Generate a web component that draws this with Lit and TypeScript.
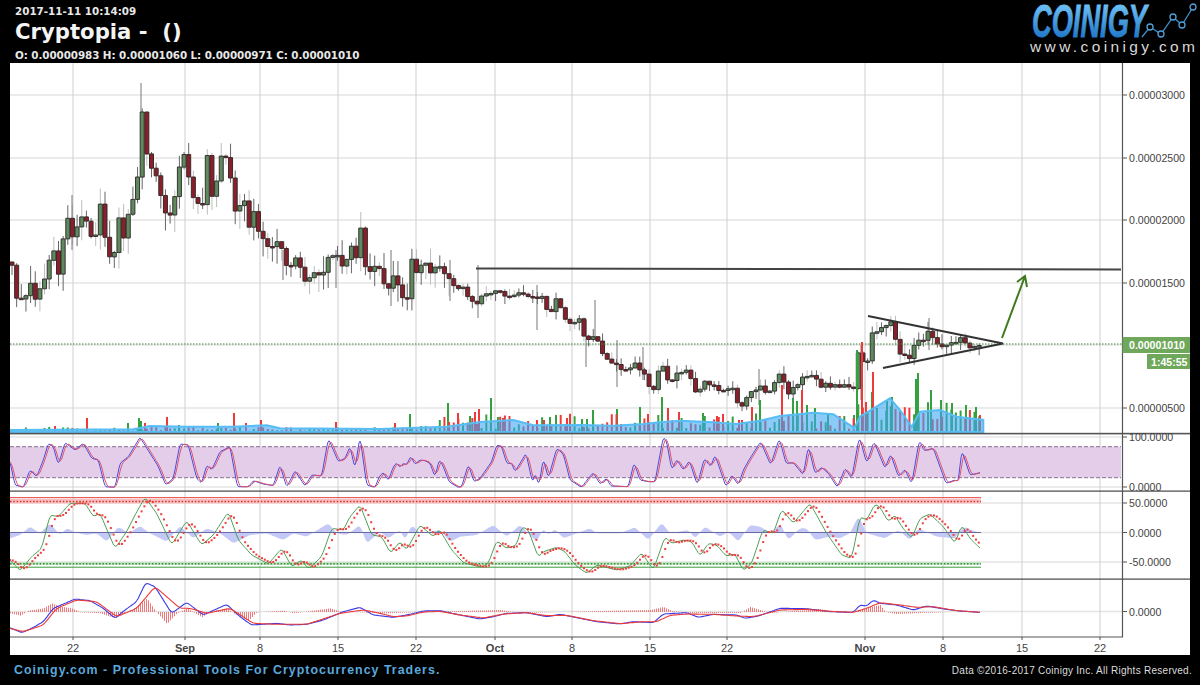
import { LitElement, html, css, svg } from "lit";
import { customElement } from "lit/decorators.js";

type P = [number, number];
const Z = (pts: number[][], ox: number, oy: number): P[] => pts.map(([X, Y]) => [ox + X / 3, oy + Y / 3] as P);
const interp = (pts: P[], x: number) => {
  if (x <= pts[0][0]) return pts[0][1];
  for (let i = 1; i < pts.length; i++) {
    if (x <= pts[i][0]) {
      const [a, b] = pts[i - 1];
      const [c, d] = pts[i];
      return b + ((d - b) * (x - a)) / Math.max(c - a, 0.01);
    }
  }
  return pts[pts.length - 1][1];
};
const sample = (pts: P[], step = 1, win = 0, lag = 0): P[] => {
  const out: P[] = [];
  const x0 = pts[0][0];
  const x1 = pts[pts.length - 1][0];
  for (let x = x0; x <= x1; x += step) {
    let s = 0;
    let n = 0;
    for (let k = -win; k <= win; k++) {
      s += interp(pts, x - lag + k);
      n++;
    }
    out.push([x, s / n]);
  }
  return out;
};
const line = (pts: P[]) => "M" + pts.map(([a, b]) => `${a.toFixed(1)} ${b.toFixed(1)}`).join("L");
const area = (pts: P[], base: number) =>
  `M${pts[0][0].toFixed(1)} ${base}L` + pts.map(([a, b]) => `${a.toFixed(1)} ${b.toFixed(1)}`).join("L") + `L${pts[pts.length - 1][0].toFixed(1)} ${base}Z`;

let seed = 12345;
const rnd = () => {
  seed = (seed * 1664525 + 1013904223) % 4294967296;
  return seed / 4294967296;
};

const pricePath: P[] = [
  ...Z([[30,565],[45,660],[60,690],[90,640],[105,670],[130,660],[150,560],[165,560],[175,600],[185,520],[205,440],[220,510],[235,460],[255,430],[270,490],[290,480],[300,400],[320,520],[335,580],[360,440],[378,560],[385,440],[405,350],[418,280],[424,110],[440,230],[450,300],[470,300],[490,400],[500,450],[520,410],[535,320],[552,240],[570,340],[585,400],[610,420],[622,270],[632,400],[650,350],[660,250],[680,260],[690,320],[705,430],[720,420],[735,400],[750,490],[760,430],[775,490],[800,540],[830,510]], 0, 70),
  ...Z([[0,90],[25,180],[45,130],[75,210],[100,185],[125,210],[145,145],[165,120],[190,180],[215,110],[230,155],[245,40],[260,205],[295,155],[320,250],[345,190],[380,290],[390,110],[405,210],[430,145],[450,190],[475,150],[500,210],[530,220],[565,260],[590,280],[610,250],[650,235],[680,260],[735,245],[770,265],[790,260],[805,330],[830,260],[860,330],[900,330]], 280, 210),
  ...Z([[0,40],[20,100],[45,70],[70,140],[100,160],[130,180],[165,160],[195,190],[215,255],[245,150],[270,230],[285,185],[320,185],[350,250],[375,210],[410,235],[460,235],[480,305],[510,250],[545,230],[565,255],[600,190],[625,250],[660,210],[690,190],[720,225],[780,230],[825,235],[835,125],[860,170],[875,70]], 580, 310),
  ...Z([[155,190],[175,280],[210,295],[232,230],[245,260],[262,215],[300,255],[340,250],[370,235],[380,265],[420,260]], 840, 260),
  [982, 344],
];

type Candle = { x: number; o: number; c: number; hi: number; lo: number; light: boolean };
const candles: Candle[] = [];
let prev = 262;
for (let x = 12; x <= 982; x += 4.65) {
  const amp = x < 270 ? 12 : x < 600 ? 7 : x < 860 ? 5 : 4;
  const c = interp(pricePath, x) + (rnd() - 0.5) * amp;
  const spread = x < 450 ? 18 : x < 860 ? 8 : 10;
  const up = rnd() * spread;
  const dn = rnd() * spread;
  candles.push({ x, o: prev, c, hi: Math.min(prev, c) - up, lo: Math.max(prev, c) + dn, light: rnd() < 0.4 });
  prev = c;
}
const bigWicks: number[][] = [[141,83,140],[478,265,318],[586,320,367],[537,285,330],[391,250,306],[336,250,288],[450,260,301],[617,340,387],[643,347,380],[759,369,405],[595,300,340],[283,250,280],[72,195,250],[861,345,400],[929,318,350]];

const upBodies = candles.filter((k) => k.c <= k.o).map((k) => `M${(k.x - 2).toFixed(2)} ${k.c.toFixed(1)}h4v${Math.max(k.o - k.c, 1.5).toFixed(1)}h-4Z`).join("");
const dnBodies = candles.filter((k) => k.c > k.o).map((k) => `M${(k.x - 2).toFixed(2)} ${k.o.toFixed(1)}h4v${Math.max(k.c - k.o, 1.5).toFixed(1)}h-4Z`).join("");
const wick = (l: boolean) => candles.filter((k) => k.light === l).map((k) => `M${k.x.toFixed(2)} ${k.hi.toFixed(1)}V${k.lo.toFixed(1)}`).join("");
const big = bigWicks.map(([x, a, b]) => `M${x} ${a}V${b}`).join("");

// volume
const tall: [number, number, string][] = [
  [55,426,"r"],[87,418,"r"],[128,423,"g"],[139,418,"g"],[141,421,"g"],[145,423,"r"],[167,417,"r"],[179,425,"g"],[218,423,"g"],[234,413,"r"],[246,423,"r"],[261,420,"r"],
  [336,422,"r"],[395,423,"r"],[410,414,"g"],[448,403,"g"],[458,413,"r"],[470,416,"g"],[475,412,"r"],[479,409,"r"],[491,398,"g"],[498,417,"g"],[503,418,"r"],[537,420,"r"],[544,420,"r"],[550,417,"g"],[556,415,"g"],[567,418,"r"],[582,419,"g"],[587,419,"g"],[593,410,"g"],
  [617,409,"g"],[640,407,"g"],[648,414,"r"],[662,397,"g"],[668,408,"r"],[679,412,"r"],[703,413,"g"],[717,416,"r"],[723,414,"r"],[739,420,"r"],[752,407,"r"],[760,400,"g"],[782,385,"r"],[793,398,"g"],[797,401,"g"],[802,390,"r"],[807,405,"g"],[815,408,"g"],[828,413,"g"],
  [854,415,"g"],[857,350,"g"],[862,342,"r"],[866,402,"r"],[872,392,"g"],[873,372,"r"],[887,400,"g"],[892,397,"g"],[916,379,"g"],[918,373,"g"],[931,390,"g"],[941,400,"g"],[952,403,"g"],[966,405,"g"],[976,407,"g"],[980,415,"r"],
];
const volG: string[] = [];
const volR: string[] = [];
for (const k of candles) {
  const h = k.x < 420 ? 1 + rnd() * 4 : k.x < 850 ? 3 + rnd() * 16 : 12 + rnd() * 18;
  (k.c <= k.o ? volG : volR).push(`M${k.x.toFixed(1)} 432V${(432 - h).toFixed(1)}`);
}
for (const [x, y, c] of tall) (c === "g" ? volG : volR).push(`M${x} 432V${y}`);
const volArea: P[] = [
  ...Z([[30,90],[400,88],[450,78],[560,80],[700,80],[800,76]], 0, 400),
  ...Z([[0,655],[300,657],[500,650],[600,636],[700,630],[760,646]], 280, 210),
  ...Z([[0,345],[100,347],[190,342],[240,337],[300,332],[400,337],[470,342],[540,332],[600,318],[700,308],[760,313],[820,352]], 580, 310).filter((p) => p[0] > 535),
  ...Z([[40,510],[60,470],[150,415],[180,450],[215,500],[240,455],[300,450],[350,470],[430,480]], 840, 260),
];

// RSI
const rsi: P[] = [
  ...Z([[30,185],[45,255],[70,262],[90,210],[110,230],[130,180],[145,130],[160,140],[175,195],[195,128],[225,150],[250,130],[275,175],[295,180],[315,260],[345,262],[360,190],[385,170],[420,112],[450,160],[475,200],[497,255],[520,235],[540,132],[565,135],[590,235],[605,250],[620,195],[635,210],[660,155],[690,140],[712,260],[745,260],[760,242],[790,252],[820,257],[840,195],[860,262],[885,212],[915,258],[935,225],[965,228],[985,115],[1015,185],[1035,175],[1050,140],[1065,205],[1080,110],[1100,255],[1125,262],[1140,225]], 0, 400),
  ...Z([[0,145],[8,125],[25,152],[40,110],[50,98],[58,112],[70,100],[80,105],[92,78],[105,103],[120,90],[135,92],[150,100],[165,140],[178,88],[190,110],[207,155],[235,172],[245,170],[265,103],[282,155],[300,145],[335,95],[350,45],[365,50],[380,100],[395,100],[405,125],[438,70],[458,160],[465,130],[477,165],[490,85],[505,145],[530,55],[550,72],[570,150],[605,172],[625,145],[640,128],[660,162],[680,145],[692,168],[745,170],[762,98],[780,150],[805,155],[825,155],[850,20],[860,35],[875,120],[890,88]], 380, 430),
  ...Z([[130,120],[148,92],[172,165],[193,85],[212,110],[225,75],[258,170],[275,135],[295,165],[310,120],[330,85],[362,35],[392,105],[418,25],[438,100],[460,98]], 640, 430),
  ...Z([[10,135],[25,48],[45,130],[65,112],[85,130],[112,172],[135,115],[155,145],[178,20],[200,100],[222,35],[255,115],[272,72],[295,140],[315,118],[335,162],[358,30],[372,62],[400,55],[438,160],[465,150],[475,155],[485,60],[510,135],[540,128]], 800, 430),
];
const rsiB = sample(rsi, 1, 1);
const rsiR = sample(rsi, 1, 2, 1.6);

// CCI
const cci: P[] = [
  ...Z([[30,480],[60,512],[95,470],[125,445],[150,345],[175,350],[210,310],[255,310],[280,350],[300,340],[345,445],[380,395],[405,345],[435,292],[470,340],[515,435],[560,362],[605,435],[640,405],[685,335],[715,420],[755,465],[805,492],[845,445],[875,500],[905,480],[925,507],[965,470],[995,385],[1030,390],[1050,350],[1080,315],[1115,405],[1145,410],[1172,460]], 0, 400),
  ...Z([[0,318],[30,372],[60,335],[80,360],[120,285],[160,320],[178,298],[215,360],[250,398],[305,412],[325,400],[350,332],[380,355],[410,345],[425,290],[445,300],[475,382],[490,365],[530,352],[555,365],[585,405],[620,430],[650,405],[710,420],[750,408],[785,368],[820,420],[855,320],[875,340]], 380, 430),
  ...Z([[130,330],[155,335],[180,378],[205,340],[230,345],[258,378],[285,372],[310,422],[335,400],[368,300],[400,310],[425,238],[460,280],[510,220],[560,310],[605,375],[635,385],[660,260],[680,270],[705,222]], 640, 430),
  ...Z([[240,232],[265,275],[285,255],[305,290],[335,325],[360,265],[390,252],[430,290],[465,340],[485,285],[510,325],[540,355]], 800, 430),
];
const cciLine = sample(cci, 1, 2);
const cciDots = sample(cci, 2.8, 4, 4.5);
const cciArea: P[] = [
  ...Z([[30,415],[60,405],[90,380],[120,400],[150,370],[180,405],[200,385],[230,398],[260,405],[290,400],[320,425],[355,380],[385,400],[420,378],[450,400],[500,425],[540,378],[580,415],[620,385],[660,400],[700,430],[750,405],[800,400],[850,420],[880,400],[920,410],[985,370],[1010,400],[1040,405],[1080,375],[1100,430]], 0, 400),
  ...Z([[0,305],[25,325],[60,300],[75,330],[95,285],[120,310],[180,300],[210,335],[240,320],[290,315],[340,285],[380,320],[420,285],[470,335],[490,295],[505,315],[525,297],[550,325],[630,295],[650,310],[720,310],[765,292],[805,330],[845,278],[870,310]], 380, 430),
  ...Z([[145,300],[165,325],[195,290],[240,320],[265,305],[295,335],[330,285],[360,290],[395,310],[420,280],[445,330],[480,295],[500,295],[525,330],[570,320],[600,325],[630,310],[655,258],[680,310]], 640, 430),
  ...Z([[255,325],[295,300],[330,330],[355,295],[410,320],[465,325],[490,290],[540,310]], 800, 430),
];

// MACD
const macdB: P[] = sample([
  ...Z([[30,683],[65,698],[95,685],[130,665],[160,625],[225,597],[270,602],[310,625],[345,655],[375,630],[410,605],[437,548],[465,560],[515,640],[560,607],[610,645],[680,613],[720,650],[755,675],[830,670],[870,675],[920,673],[970,660],[1030,635],[1080,622],[1120,645]], 0, 400),
  ...Z([[40,562],[80,555],[130,543],[180,542],[240,555],[300,567],[340,560],[380,550],[440,548],[500,560],[540,553],[600,565],[650,575],[720,582],[760,575],[820,578],[850,552]], 380, 430),
  ...Z([[140,548],[175,562],[220,553],[290,555],[315,565],[355,558],[420,535],[500,536],[570,545],[640,547],[660,525],[680,528],[700,510]], 640, 430),
  ...Z([[240,520],[290,525],[340,540],[380,528],[440,538],[480,543],[540,547]], 800, 430),
], 1, 2);
const macdR: P[] = sample([
  ...Z([[30,685],[70,695],[130,675],[170,625],[230,600],[290,605],[350,650],[410,625],[465,560],[500,590],[540,625],[570,625],[620,640],[690,625],[760,670],[830,673],[920,673],[1020,640],[1090,630],[1140,640]], 0, 400),
  ...Z([[40,560],[80,558],[130,546],[180,544],[240,555],[310,564],[370,552],[440,548],[500,557],[560,556],[640,572],[720,581],[790,575],[830,575],[870,556]], 380, 430),
  ...Z([[140,552],[220,553],[290,558],[340,560],[420,540],[500,538],[570,544],[640,547],[680,535]], 640, 430),
  ...Z([[240,518],[300,525],[350,532],[400,530],[470,542],[540,547]], 800, 430),
], 1, 3);
const histKeys: P[] = [
  ...Z([[30,640],[60,647],[85,632],[130,625],[155,610],[180,620],[215,625],[240,637],[300,640],[345,655],[370,640],[400,628],[440,595],[465,632],[500,672],[530,640],[560,625],[605,652],[630,635],[680,625],[700,640],[745,662],[770,637],[850,632],[880,640],[990,625],[1020,635],[1160,640]], 0, 400),
  [420, 612], [500, 610], [520, 613], [600, 611], [650, 610], [663, 607], [672, 611], [690, 613], [740, 613], [750, 607], [770, 613], [820, 609], [840, 613], [858, 611], [870, 607], [880, 605], [885, 612], [895, 614], [950, 612], [981, 612],
];
const histPath = sample(histKeys, 2).map(([x, y]) => `M${(Math.floor(x) + 0.5).toFixed(1)} 612V${y.toFixed(1)}`).join("");

const vGrid = [
  { x: 73, t: "22" }, { x: 185, t: "Sep", b: true }, { x: 260, t: "8" }, { x: 338, t: "15" }, { x: 416, t: "22" }, { x: 495, t: "Oct", b: true }, { x: 572, t: "8" },
  { x: 650, t: "15" }, { x: 727, t: "22" }, { x: 865, t: "Nov", b: true }, { x: 943, t: "8" }, { x: 1022, t: "15" }, { x: 1100, t: "22" },
];
const hGrid = [95, 158, 220, 283, 345, 408, 437, 487, 503, 532.5, 562, 611.5];
const yLabels: [number, string][] = [
  [95, "0.00003000"], [158, "0.00002500"], [220, "0.00002000"], [283, "0.00001500"], [408, "0.00000500"],
  [437, "100.0000"], [487, "0.0000"], [503, "50.0000"], [532.5, "0.0000"], [562, "-50.0000"], [611.5, "0.0000"],
];

@customElement("app-root")
export class AppRoot extends LitElement {
  static styles = css`
    :host { display: flex; flex-direction: column; width: 1200px; height: 685px; background: #000; overflow: hidden; }
    .head { display: flex; justify-content: space-between; height: 63px; }
    .info { display: flex; flex-direction: column; padding: 4px 0 0 15px; font-family: "DejaVu Sans", sans-serif; font-weight: 700; color: #e8e8e8; white-space: pre; }
    .small { font-size: 10.35px; line-height: 14px; }
    .ohlc { letter-spacing: -0.07px; }
    .title { font-size: 21.2px; line-height: 28px; color: #f4f4f4; margin-bottom: 2px; }
    .logo { width: 170px; height: 63px; display: block; overflow: visible; }
    .logo-word { font: italic 700 46px "Liberation Sans", sans-serif; }
    .logo-url { font: 400 15.5px "Liberation Sans", sans-serif; fill: #d8d8d8; }
    .chart { display: block; width: 1180px; height: 592px; margin-left: 10px; background: #fff; flex: none; }
    .lbl { font: 400 10.6px "Liberation Sans", sans-serif; fill: #444; }
    .xl { font: 400 11px "Liberation Sans", sans-serif; fill: #444; text-anchor: middle; }
    .xb { font-weight: 700; }
    .cur { font: 700 10.6px "Liberation Sans", sans-serif; fill: #fff; }
    .foot { flex: 1; display: flex; justify-content: space-between; align-items: center; padding: 0 8px 0 14px; }
    .tag { font: 700 12.4px "Liberation Sans", sans-serif; letter-spacing: 1.02px; color: #5aa9dc; }
    .copy { font: 400 10px "Liberation Sans", sans-serif; letter-spacing: .27px; color: #ddd; }
  `;

  private logo() {
    return svg`
      <defs><linearGradient id="lg" gradientUnits="userSpaceOnUse" x1="0" y1="4" x2="0" y2="38"><stop offset="0" stop-color="#6fc0f5"/><stop offset="1" stop-color="#1f78c8"/></linearGradient></defs>
      <text class="logo-word" x="2" y="37" fill="url(#lg)" stroke="url(#lg)" stroke-width=".9" textLength="115" lengthAdjust="spacingAndGlyphs">COINIGY</text>
      <path d="M112 37L120 27L131 34L143 17L152 25L163 7" fill="none" stroke="#3f8fc9" stroke-width="1.3"/>
      ${([[120, 27], [131, 34], [143, 17], [152, 25], [163, 7]] as P[]).map(([a, b]) => svg`<circle cx=${a} cy=${b} r="3" fill="#000" stroke="#4f9fd6" stroke-width="1.3"/>`)}
      <text class="logo-url" x="0" y="52" textLength="165">www.coinigy.com</text>`;
  }

  private chart() {
    return svg`
      ${hGrid.map((y) => svg`<line x1="10" x2="1122" y1=${y} y2=${y} stroke="#e4e4e4" stroke-width="1.6"/>`)}
      ${vGrid.map((g) => svg`<line x1=${g.x} x2=${g.x} y1="63" y2="637" stroke="#cfcfcf"/>`)}

      <path d=${wick(true)} stroke="#bdbdbd" fill="none"/>
      <path d=${wick(false)} stroke="#666" fill="none"/>
      <path d=${big} stroke="#777" fill="none"/>
      <path d=${upBodies} fill="#5f8a5c" stroke="#333" stroke-width="1"/>
      <path d=${dnBodies} fill="#8a1f2c" stroke="#3a2a2a" stroke-width="1"/>

      <line x1="10" x2="1122" y1="344" y2="344" stroke="#3f8a3a" stroke-dasharray="1.5 1.5"/>

      <path d=${volG.join("")} stroke="#35a040" stroke-width="2" fill="none"/>
      <path d=${volR.join("")} stroke="#f03a3a" stroke-width="2" fill="none"/>
      <path d=${area(volArea, 432)} fill="#3ea6f5" fill-opacity=".6" stroke="#58bdf2" stroke-width="2"/>

      <path d="M476 268.5L1121 269.5" stroke="#444" stroke-width="2"/>
      <path d="M868 316L1003 343.5L883 368" fill="none" stroke="#333" stroke-width="2"/>
      <path d="M1002 338L1025 276M1017 282L1025 276L1027 287" fill="none" stroke="#3f7a1e" stroke-width="2"/>

      <rect x="10" y="446.7" width="1111" height="31" fill="#e3cde8"/>
      <path d="M10 446.7H1121M10 477.7H1121" stroke="#8a6f8e" stroke-dasharray="4 2"/>
      <path d=${line(rsiB)} fill="none" stroke="#4a4ae0"/>
      <path d=${line(rsiR)} fill="none" stroke="#e0506a"/>

      <rect x="10" y="499" width="971" height="4.5" fill="#f9c0c0"/>
      <rect x="10" y="562" width="971" height="3" fill="#c5e3c5"/>
      <path d="M10 497.7H981" stroke="#e23c3c"/>
      <path d="M10 501.5H981" stroke="#d83030" stroke-width="1.6" stroke-dasharray="1.5 1.8"/>
      <path d="M10 563.7H981" stroke="#2f8f35" stroke-width="1.6" stroke-dasharray="1.5 1.8"/>
      <path d="M10 567.2H981" stroke="#3a9a3a"/>
      <path d=${area(sample(cciArea, 1, 2), 532.5)} fill="#c4c8f6"/>
      <path d="M10 532.5H981" stroke="#6a6aa8" stroke-width="1.2"/>
      <path d=${line(cciLine)} fill="none" stroke="#4f9d55"/>
      ${cciDots.map(([a, b]) => svg`<rect x=${a - 1} y=${b - 1} width="2" height="2" fill="#ee3f3f"/>`)}

      <path d=${histPath} stroke="#f07a7a" fill="none"/>
      <path d=${line(macdB)} fill="none" stroke="#3a3ae6" stroke-width="1.1"/>
      <path d=${line(macdR)} fill="none" stroke="#ea3a3a" stroke-width="1.1"/>

      <rect x="10" y="432.8" width="1180" height="1.6" fill="#555"/>
      <rect x="10" y="490.5" width="1180" height="1.2" fill="#444"/>
      <rect x="10" y="578.5" width="1180" height="1.2" fill="#444"/>
      <path d="M1122.5 63V637H10" fill="none" stroke="#555" stroke-width="1.2"/>
      ${vGrid.map((g) => svg`<line x1=${g.x} x2=${g.x} y1="637" y2="640" stroke="#555"/>
        <text class="xl ${g.b ? "xb" : ""}" x=${g.x} y="652">${g.t}</text>`)}
      ${yLabels.map(([y, t]) => svg`<line x1="1122" x2="1127" y1=${y} y2=${y} stroke="#555"/><text class="lbl" x="1129" y=${y + 4}>${t}</text>`)}

      <rect x="1122.5" y="337" width="67.5" height="16" fill="#6fa85a"/>
      <text class="cur" x="1129" y="349">0.00001010</text>
      <rect x="1147" y="354" width="43" height="15" fill="#6fa85a"/>
      <text class="cur" x="1151" y="365.5">1:45:55</text>`;
  }

  render() {
    return html`
      <div class="head">
        <div class="info">
          <div class="small">2017-11-11 10:14:09</div>
          <div class="title">Cryptopia -  ()</div>
          <div class="small ohlc">O: 0.00000983 H: 0.00001060 L: 0.00000971 C: 0.00001010</div>
        </div>
        <svg class="logo" viewBox="0 0 170 63">${this.logo()}</svg>
      </div>
      <svg class="chart" viewBox="10 63 1180 592">${this.chart()}</svg>
      <div class="foot">
        <span class="tag">Coinigy.com - Professional Tools For Cryptocurrency Traders.</span>
        <span class="copy">Data ©2016-2017 Coinigy Inc. All Rights Reserved.</span>
      </div>`;
  }
}
